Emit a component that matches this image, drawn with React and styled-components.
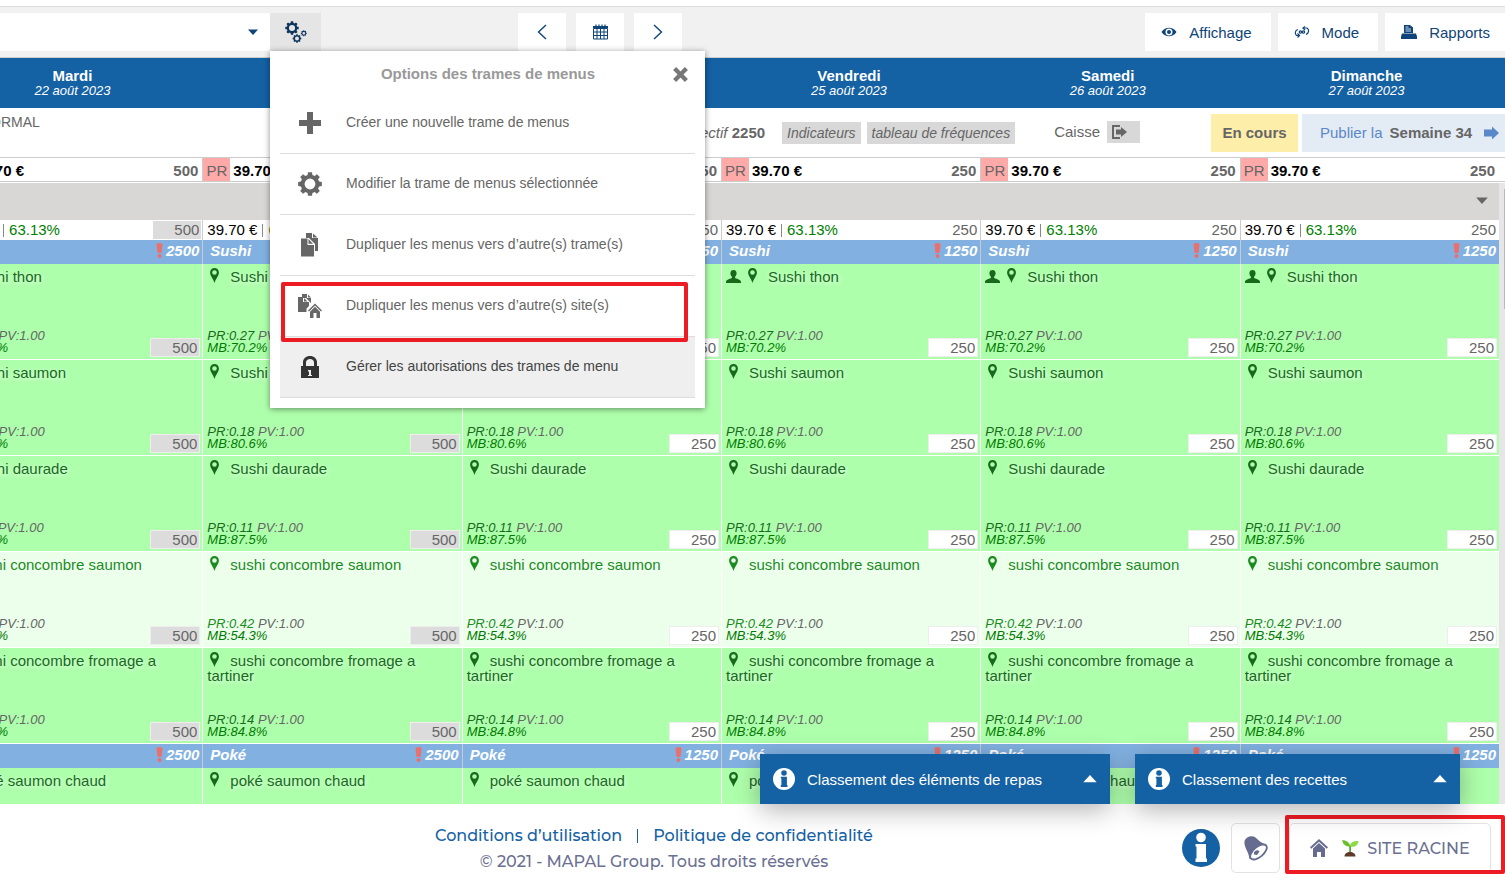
import React from 'react'
import styled, { createGlobalStyle } from 'styled-components';

const bleu = '#1461a4';
const gris = '#666';

const GlobalStyle = createGlobalStyle`
	* {
		box-sizing: border-box;
	}
	body {
		margin: 0;
		background: white;
		color: ${gris};
		font-family: 'Liberation Sans', Arial, sans-serif;
		font-size: 15px;
	}
	button, input, select {
		font: inherit;
		color: inherit;
		border: 0;
		margin: 0;
		padding: 0;
		background: none;
	}
	svg {
		display: block;
		flex: none;
	}
`

const Page = styled.div`
		display: flex;
		flex-direction: column;
		height: 100vh;
		overflow: hidden;
`

/* ---------- barre d'outils ---------- */

const Toolbar = styled.header`
		position: relative;
		z-index: 10;
		display: flex;
		flex: none;
		height: 52px;
		margin-top: 6px;
		padding: 6px 0;
		background: #f1f1f1;
		border-top: 1px solid #ddd;
		border-bottom: 1px solid #ccc;
`

const TrameSelect = styled.label`
		position: relative;
		width: 270px;
		background: white;

		select {
			width: 100%;
			height: 100%;
			appearance: none;
		}
		svg {
			position: absolute;
			right: 12px;
			top: 16px;
		}
`

const GearButton = styled.button`
		display: flex;
		justify-content: center;
		align-items: center;
		width: 51px;
		background: #e5e5e5;
`

const WeekNav = styled.nav`
		display: flex;
		gap: 10px;
		margin-left: 197px;
`

const NavButton = styled.button`
		display: flex;
		justify-content: center;
		align-items: center;
		width: 48px;
		background: white;
`

const Tools = styled.div`
		display: flex;
		gap: 7px;
		margin-left: auto;
`

const ToolButton = styled.button`
		display: flex;
		align-items: center;
		gap: 12px;
		padding: 0 19px 0 16px;
		background: white;
		color: #0e4479;

		&:last-child {
			padding-right: 15px;
		}
`

/* ---------- menu des options ---------- */

const OptionsMenu = styled.section`
		position: absolute;
		top: 44px;
		left: 270px;
		width: 435px;
		padding: 0 10px 10px;
		background: white;
		box-shadow: 0 1px 6px rgba(0,0,0,0.45);
`

const MenuHeader = styled.div`
		display: flex;
		align-items: center;
		height: 42px;
		padding: 4px 7px 0 23px;
`

const MenuTitle = styled.h2`
		flex: 1;
		margin: 0;
		padding-bottom: 2px;
		text-align: center;
		font-size: 15px;
		color: #999;
`

const MenuList = styled.ul`
		margin: 0;
		padding: 0;
		list-style: none;
`

const MenuItem = styled.li`
		position: relative;
		height: 61px;
		border-bottom: 1px solid #ddd;
		background: ${props=>props.$active ? '#efefef' : 'white'};

		button {
			display: flex;
			align-items: center;
			gap: 24px;
			width: 100%;
			height: 100%;
			padding-left: 18px;
			font-size: 14px;
			color: ${props=>props.$active ? '#444' : gris};
		}
		span {
			padding-bottom: 2px;
		}
`

const MenuFrame = styled.div`
		position: absolute;
		z-index: 1;
		inset: 6px 7px -6px 1px;
		border: 4px solid #ed1c24;
		border-radius: 2px;
		pointer-events: none;
`

/* ---------- jours et statut ---------- */

const Clip = styled.div`
		flex: none;
		overflow: hidden;
`

const DaysBar = styled(Clip)`
		background: ${bleu};
`

const DaysTable = styled.table`
		width: calc(100% + 48px);
		height: 50px;
		margin-left: -57px;
		table-layout: fixed;
		border-spacing: 0;
		color: white;

		th {
			padding: 0;
			line-height: 15px;
		}
		span {
			display: block;
			font-size: 13px;
			font-style: italic;
			font-weight: normal;
		}
`

const StatusBar = styled.div`
		display: flex;
		flex: none;
		align-items: center;
		height: 49px;
		overflow: hidden;
`

const TrameName = styled.span`
		align-self: flex-start;
		margin: 6px auto 0 -20px;
		font-size: 14px;
`

const Objectif = styled.span`
		margin-right: 17px;
		font-style: italic;

		b {
			font-style: normal;
		}
`

const StatusButton = styled.button`
		height: 22px;
		margin-right: 6px;
		padding: 0 5px;
		background: #d8d8d8;
		font-size: 14px;
		font-style: italic;
`

const Caisse = styled.div`
		display: flex;
		align-items: center;
		gap: 7px;
		margin: 0 71px 2px 33px;

		button {
			width: 33px;
			height: 22px;
			padding-left: 5px;
			background: #d8d8d8;
		}
`

const EnCours = styled.span`
		width: 87px;
		margin-right: 4px;
		background: #fdeea9;
		text-align: center;
		font-weight: bold;
		line-height: 38px;
`

const Publier = styled.button`
		display: flex;
		align-items: center;
		gap: 7px;
		width: 203px;
		height: 38px;
		padding-left: 18px;
		background: #e3ebf4;
		color: #5b88c9;

		b {
			color: ${gris};
		}
		svg {
			margin-left: 5px;
		}
`

const PrixBar = styled(Clip)`
		border-top: 1px solid #ccc;
		border-bottom: 1px solid #ccc;
`

const PrixTable = styled.table`
		width: calc(100% + 51px);
		margin-left: -57px;
		table-layout: fixed;
		border-spacing: 0;

		td {
			padding: 0;
			border-left: 1px solid #ccc;
		}
`

const Prix = styled.div`
		display: flex;
		height: 23px;
		padding-right: 4px;
		color: black;
		font-weight: bold;
		line-height: 26px;
`

const PrBadge = styled.span`
		width: 27px;
		margin-right: 3px;
		background: #ffa9a9;
		color: ${gris};
		font-weight: normal;
		text-align: center;
`

const Count = styled.span`
		margin-left: auto;
		color: ${gris};
`

/* ---------- planning ---------- */

const Planning = styled.main`
		position: relative;
		z-index: 1;
		flex: 1;
		min-height: 0;
		margin-top: 1px;
`

const Viewport = styled.div`
		display: flex;
		height: 100%;
		overflow: hidden;
`

const Scrollbar = styled.div`
		flex: none;
		width: 6px;
		padding: 6px 0 0 5px;
		background: #e6e6e6;

		&::before {
			content: '';
			display: block;
			height: 120px;
			background: #b9b9c6;
		}
`

const Sheet = styled.div`
		flex: 1;
		min-width: 0;
		overflow: hidden;
`

const Service = styled.button`
		display: flex;
		justify-content: flex-end;
		align-items: center;
		width: 100%;
		height: 37px;
		padding: 0 11px 3px 0;
		background: #d8d7d5;
`

const MenuTable = styled.table`
		width: calc(100% + 57px);
		margin-left: -57px;
		table-layout: fixed;
		border-spacing: 0;

		td, th {
			padding: 0;
			vertical-align: top;
			text-align: left;
			font-weight: normal;
		}
`

const TotalCell = styled.td`
		border-left: 1px solid #ccc;

		div {
			display: flex;
			align-items: center;
			gap: 5px;
			height: 20px;
			padding: 0 1px 0 4px;
			color: black;
			line-height: 18px;
		}
		i {
			width: 1px;
			height: 13px;
			background: #888;
		}
		span {
			color: #008000;
		}
`

const TotalInput = styled.input`
		width: 48px;
		height: 18px;
		margin-left: auto;
		padding: 0 2px 1px 0;
		background: ${props=>props.readOnly ? '#dcdcdc' : 'white'};
		color: ${gris};
		text-align: right;
`

const FamilleCell = styled.th`
		border-left: 1px solid #c4cbd2;
		background: #82b1e1;

		div {
			display: flex;
			align-items: center;
			height: 24px;
			padding: 0 3px 3px 7px;
			color: white;
			font-weight: bold;
			font-style: italic;
		}
		svg {
			margin: 0 3px 0 auto;
		}
`

const RecetteCell = styled.td`
		border-left: 1px solid white;
		border-bottom: 1px solid white;
		background: ${props=>props.$light ? '#ebffeb' : '#aeffac'};
		color: ${props=>props.$light ? '#1a8c1e' : '#176a1c'};
`

const Recette = styled.div`
		display: flex;
		flex-direction: column;
		justify-content: space-between;
		height: 95px;
		padding: 4px 2px 2px 4px;
`

const Nom = styled.div`
		line-height: 15px;
		padding-right: 30px;
		text-shadow: 1px 1px 4px rgba(255,255,255,0.8);

		svg {
			display: inline-block;
			vertical-align: -1px;
		}
`

const Pied = styled.div`
		display: flex;
		justify-content: space-between;
		align-items: flex-end;
`

const Marges = styled.div`
		margin-bottom: 3px;
		font-size: 13px;
		font-style: italic;
		line-height: 12px;

		span {
			color: ${gris};
		}
		div {
			color: #007a00;
		}
`

const Quantite = styled.input`
		width: 50px;
		height: 19px;
		padding-right: 2px;
		border: 1px solid #eee;
		background: ${props=>props.readOnly ? '#dcdcdc' : 'white'};
		color: ${gris};
		text-align: right;
`

const Classements = styled.div`
		position: absolute;
		right: 45px;
		bottom: 0;
		display: flex;
		gap: 25px;
`

const Classement = styled.button`
		display: flex;
		align-items: center;
		gap: 12px;
		width: ${props=>props.$width}px;
		height: 50px;
		padding: 0 13px;
		background: ${bleu};
		color: white;
		box-shadow: 0 6px 26px rgba(0,0,0,0.3);

		svg:last-child {
			margin-left: auto;
		}
`

/* ---------- pied de page ---------- */

const Footer = styled.footer`
		display: flex;
		flex: none;
		align-items: center;
		height: 74px;
		font-family: Montserrat, Inter, sans-serif;
		font-size: 16px;
		font-weight: 500;
		color: #6b7092;
`

const Mentions = styled.div`
		flex: 1;
		padding: 16px 0 0 126px;
		text-align: center;
		line-height: 26px;

		a {
			color: ${bleu};
			text-decoration: none;
		}
		i {
			display: inline-block;
			width: 1px;
			height: 14px;
			margin: 0 15px;
			background: ${bleu};
			vertical-align: -2px;
		}
`

const FooterActions = styled.div`
		display: flex;
		align-items: center;
		margin-top: 14px;
		padding-right: 14px;
`

const BoxButton = styled.button`
		display: flex;
		justify-content: center;
		align-items: center;
		height: 50px;
		min-width: 49px;
		margin-left: 11px;
		border: 1px solid #e2e2e2;
		border-radius: 5px;
`

const SiteBox = styled.div`
		position: relative;
		margin-left: 9px;

		button {
			gap: 8px;
			width: 202px;
			margin: 0;
		}
		svg:first-child {
			margin-right: 6px;
		}
`

const SiteFrame = styled.div`
		position: absolute;
		inset: -8px -14px -1px -4px;
		border: 4px solid #ed1c24;
		border-radius: 2px;
		pointer-events: none;
`

/* ---------- icônes ---------- */

// couronne dentée : 8 dents autour du cercle, avec le trou central
const gearPath = (cx, cy, r) => {
	const points = []
	for (let i = 0; i < 8; i++) {
		const a = i * Math.PI / 4
		const steps = [[-0.26, 0.78], [-0.17, 1], [0.17, 1], [0.26, 0.78]]
		steps.forEach(([d, k]) => {
			points.push((cx + Math.cos(a + d) * r * k).toFixed(2) + ' ' + (cy + Math.sin(a + d) * r * k).toFixed(2))
		})
	}
	const h = r * 0.45
	return `M${points.join('L')}ZM${cx - h} ${cy}a${h} ${h} 0 1 0 ${2 * h} 0a${h} ${h} 0 1 0 ${-2 * h} 0Z`
}

const Caret = ({color, up, width = 10}) => (
	<svg width={width} height={width / 2 + 1} viewBox="0 0 10 6" fill={color}>
		<path d={up ? 'M0 5.5 5 0l5 5.5z' : 'M0 .5h10L5 6z'} />
	</svg>
)

const GearsIcon = () => (
	<svg width="22" height="22" viewBox="0 0 22 22" fill="#0d355c" fillRule="evenodd">
		<path d={gearPath(7, 7, 6.8)} />
		<path d={gearPath(12, 17.5, 4.4)} />
		<path d={gearPath(18.8, 12.3, 3)} />
	</svg>
)

const GearIcon = () => (
	<svg width="24" height="24" viewBox="0 0 24 24" fill={gris} fillRule="evenodd">
		<path d={gearPath(12, 12, 12)} />
	</svg>
)

const PlusIcon = () => (
	<svg width="24" height="24" viewBox="0 0 24 24" fill={gris}>
		<path d="M9 1h6v8h8v6h-8v8H9v-8H1V9h8z" />
	</svg>
)

const CopyIcon = () => (
	<svg width="24" height="24" viewBox="0 0 24 24" fill={gris}>
		<path d="M8 0h6v5h6v13h-3V11l-6-6H8z" />
		<path d="M15 .5 19.500 4.500H15z" />
		<path d="M3 5.500h6.500V12H16v11.500H3z" />
		<path d="M10.500 6 15 10.800h-4.500z" />
	</svg>
)

const CopyHomeIcon = () => (
	<svg width="24" height="24" viewBox="0 0 24 24" fill={gris}>
		<path d="M4 0h5v4h4v5l-5-5H4zM10 .5 13 3.500h-3z" />
		<path d="M0 3h5v5h6v4l-2.500 2.500V18H0z" />
		<path d="M6 4 9.500 7.500H6z" />
		<path d="m17 9.500 7 7-1 1-6-6-6 6-1-1z" />
		<path d="m17 12.800 5 5V24h-3.500v-5h-3v5H12v-6.200z" />
	</svg>
)

const LockIcon = () => (
	<svg width="24" height="24" viewBox="0 0 24 24" fill="#333" fillRule="evenodd">
		<path d="M5 11V7.500C5 3.500 8 1 12 1s7 2.500 7 6.500V11h2v12H3V11zM8 11h8V7.500C16 5.300 14.300 4 12 4S8 5.300 8 7.500zM10 15v1.500h1V20h-1v1h4v-1h-1v-5z" />
	</svg>
)

const CloseIcon = () => (
	<svg width="15" height="15" viewBox="0 0 14 14" fill="none" stroke="#777" strokeWidth="4">
		<path d="M1.500 1.500 12.500 12.500M12.500 1.500 1.500 12.500" />
	</svg>
)

const ChevronIcon = ({right}) => (
	<svg width="10" height="16" viewBox="0 0 10 16" fill="none" stroke="#0e4479" strokeWidth="1.400">
		<path d={right ? 'M1 1l7.500 7L1 15' : 'M9 1 1.500 8 9 15'} />
	</svg>
)

const CalendarIcon = () => (
	<svg width="15" height="16" viewBox="0 0 15 16" fill="none" stroke="#0e4479">
		<path d="M.500 4.500h14v10.500H.500zM.500 8h14M.500 11.500h14M4 4.500V15M7.500 4.500V15M11 4.500V15" />
		<path d="M0 3h15" strokeWidth="2" />
		<path d="M3 .500v3M6 .500v3M9 .500v3M12 .500v3" strokeWidth="1.200" />
	</svg>
)

const EyeIcon = () => (
	<svg width="16" height="10" viewBox="0 0 16 10" fill="#0e4479" fillRule="evenodd">
		<path d="M.5 5c2-3 4.700-4.200 7.500-4.200S13.500 2 15.500 5c-2 3-4.700 4.200-7.500 4.200S2.500 8 .5 5zm4 0a3.500 3.500 0 1 0 7 0 3.500 3.500 0 1 0-7 0z" />
		<circle cx="8" cy="5" r="2" />
	</svg>
)

const ModeIcon = () => (
	<svg width="16" height="12" viewBox="0 0 16 12" fill="none" stroke="#0e4479" strokeWidth="1.200">
		<path d="M4 3.500C1 4 .500 8 2.500 9.500H5M12 8.500c3-1 3.500-5 1-6.500H9" />
		<path d="M3.500 7.500 5.500 9.500l-2 2M11 .500 9 2l2 2" />
		<circle cx="6.500" cy="6" r="1.200" />
		<circle cx="9.500" cy="6" r="1.200" />
	</svg>
)

const PrinterIcon = () => (
	<svg width="16" height="14" viewBox="0 0 16 14" fill="#0e4479">
		<path d="M3 0h6l3 2.500V8H3z" />
		<path d="M4.500 2h3M4.500 4h5.500M4.500 6h5.500" stroke="white" strokeWidth=".8" />
		<path d="M1 8.500h14l1 3V14H0v-2.500z" />
	</svg>
)

const ExitIcon = () => (
	<svg width="15" height="14" viewBox="0 0 15 14" fill={gris}>
		<path d="M8 0v2H2v10h6v2H0V0z" />
		<path d="M4 4.500h5V2l6 5-6 5V9.500H4z" />
	</svg>
)

const ArrowIcon = () => (
	<svg width="15" height="14" viewBox="0 0 15 14" fill="#5b88c9">
		<path d="M0 3.500h8V.500L15 7l-7 6.500v-3H0z" />
	</svg>
)

const UserIcon = styled(props => (
	<svg width="15" height="13" viewBox="0 0 15 13" fill="currentColor" {...props}>
		<path d="M7.500 0c1.900 0 3.100 1.200 3.100 3.300 0 1.500-.7 2.700-1.500 3.500v1C9.600 8.900 15 9.200 15 12v1H0v-1c0-2.800 5.400-3.100 5.900-4.200v-1c-.8-.8-1.500-2-1.500-3.500C4.400 1.200 5.600 0 7.500 0z" />
	</svg>
))`
		margin-right: 4px;
`

const PinIcon = styled(props => (
	<svg width="10" height="15" viewBox="0 0 10 15" fill="currentColor" fillRule="evenodd" {...props}>
		<path d="M4.500 0a4.400 4.400 0 0 1 4.400 4.600C8.900 8 6 10.500 4.500 15 3 10.500.1 8 .1 4.600A4.400 4.400 0 0 1 4.500 0zm0 2.200a2.300 2.300 0 1 0 0 4.600 2.300 2.300 0 0 0 0-4.600z" />
	</svg>
))`
		margin: 0 10px 0 3px;
`

const AlertIcon = () => (
	<svg width="7" height="15" viewBox="0 0 7 15" fill="#e8706f">
		<path d="M.500 1.500Q.500 0 3.500 0t3 1.500L5.500 10h-4z" />
		<circle cx="3.500" cy="13" r="2" />
	</svg>
)

const InfoIcon = ({size, color, mark}) => (
	<svg width={size} height={size} viewBox="0 0 38 38" fill={mark}>
		<circle cx="19" cy="19" r="19" fill={color} />
		<circle cx="19" cy="8.500" r="4.800" />
		<path d="M13.500 15H24v14.500h1V33H13.500v-3.500h1v-12h-1z" />
	</svg>
)

const BellIcon = () => (
	<svg width="26" height="26" viewBox="0 0 26 26">
		<path d="M1.500 6C3 1.500 9 0 12.500 2.500c2.500 2.500 6.500 6 11.500 7.500L6.500 24C6 17 .5 12 1.500 6z" fill="#666c90" />
		<ellipse cx="15.500" cy="17" rx="10" ry="5" transform="rotate(-40 15.500 17)" fill="white" stroke="#666c90" strokeWidth="1.800" />
		<path d="M11 19.500a3.200 3.200 0 0 1 5.500-3l-2.500 3.500z" fill="#666c90" />
	</svg>
)

const HomeIcon = () => (
	<svg width="18" height="18" viewBox="0 0 18 18" fill="#666c90">
		<path d="m9 0 9 8.200-1.300 1.500L9 2.800 1.300 9.700 0 8.200z" />
		<path d="m9 4 6 5.500V18h-4v-5H7v5H3V9.500z" />
	</svg>
)

const SproutIcon = () => (
	<svg width="17" height="18" viewBox="0 0 17 18">
		<path d="M8 14c.3-3 .3-5 0-8" fill="none" stroke="#5c9e31" strokeWidth="1.800" />
		<path d="M8.500 7.500C7.500 3 4 .8 0 1.200 1 6 4.500 7.800 8.500 7.500z" fill="#6cc02f" />
		<path d="M8 7.500C8 3.500 11.500 1.800 16.500 2c-.5 4.500-4 6.500-8.500 5.500z" fill="#8bdb45" />
		<path d="M2.500 17.500c0-3 2.500-4.500 5.500-4.500s5.500 1.500 5.500 4.500z" fill="#5d3a2a" />
	</svg>
)

/* ---------- données ---------- */

const jours = [
	{nom: 'Mardi', date: '22 août 2023', quantite: 500, verrou: true},
	{nom: 'Mercredi', date: '23 août 2023', quantite: 500, verrou: true},
	{nom: 'Jeudi', date: '24 août 2023', quantite: 250, perso: true},
	{nom: 'Vendredi', date: '25 août 2023', quantite: 250, perso: true},
	{nom: 'Samedi', date: '26 août 2023', quantite: 250, perso: true},
	{nom: 'Dimanche', date: '27 août 2023', quantite: 250, perso: true},
]

const sushis = [
	{nom: 'Sushi thon', pr: '0.27', mb: '70.2%', perso: true},
	{nom: 'Sushi saumon', pr: '0.18', mb: '80.6%'},
	{nom: 'Sushi daurade', pr: '0.11', mb: '87.5%'},
	{nom: 'sushi concombre saumon', pr: '0.42', mb: '54.3%', light: true},
	{nom: 'sushi concombre fromage a tartiner', pr: '0.14', mb: '84.8%'},
]

const pokes = [
	{nom: 'poké saumon chaud'},
]

const options = [
	{texte: 'Créer une nouvelle trame de menus', Icon: PlusIcon},
	{texte: 'Modifier la trame de menus sélectionnée', Icon: GearIcon},
	{texte: 'Dupliquer les menus vers d’autre(s) trame(s)', Icon: CopyIcon},
	{texte: 'Dupliquer les menus vers d’autre(s) site(s)', Icon: CopyHomeIcon, cadre: true},
	{texte: 'Gérer les autorisations des trames de menu', Icon: LockIcon, active: true},
]

const Famille = ({nom, recettes}) => (
	<>
		<tr>
			{jours.map(jour => (
				<FamilleCell key={jour.nom}>
					<div>{nom}<AlertIcon />{jour.quantite * 5}</div>
				</FamilleCell>
			))}
		</tr>
		{recettes.map(recette => (
			<tr key={recette.nom}>
				{jours.map(jour => (
					<RecetteCell key={jour.nom} $light={recette.light}>
						<Recette>
							<Nom>
								{recette.perso && jour.perso && <UserIcon />}
								<PinIcon />
								{recette.nom}
							</Nom>
							{recette.pr && (
								<Pied>
									<Marges>
										PR:{recette.pr} <span>PV:1.00</span>
										<div>MB:{recette.mb}</div>
									</Marges>
									<Quantite
										aria-label={`${recette.nom}, ${jour.nom}`}
										defaultValue={jour.quantite}
										readOnly={jour.verrou}
									/>
								</Pied>
							)}
						</Recette>
					</RecetteCell>
				))}
			</tr>
		))}
	</>
)

export default () => {
	return (
		<Page>
			<GlobalStyle />
			<Toolbar>
				<TrameSelect>
					<select aria-label="Trame de menus"><option></option></select>
					<Caret color="#0e4479" />
				</TrameSelect>
				<GearButton aria-label="Options des trames"><GearsIcon /></GearButton>
				<WeekNav>
					<NavButton aria-label="Semaine précédente"><ChevronIcon /></NavButton>
					<NavButton aria-label="Calendrier"><CalendarIcon /></NavButton>
					<NavButton aria-label="Semaine suivante"><ChevronIcon right /></NavButton>
				</WeekNav>
				<Tools>
					<ToolButton><EyeIcon />Affichage</ToolButton>
					<ToolButton><ModeIcon />Mode</ToolButton>
					<ToolButton><PrinterIcon />Rapports</ToolButton>
				</Tools>

				<OptionsMenu>
					<MenuHeader>
						<MenuTitle>Options des trames de menus</MenuTitle>
						<button aria-label="Fermer"><CloseIcon /></button>
					</MenuHeader>
					<MenuList>
						{options.map(({texte, Icon, active, cadre}) => (
							<MenuItem key={texte} $active={active}>
								<button><Icon /><span>{texte}</span></button>
								{cadre && <MenuFrame />}
							</MenuItem>
						))}
					</MenuList>
				</OptionsMenu>
			</Toolbar>

			<DaysBar>
				<DaysTable>
					<thead>
						<tr>
							{jours.map(jour => (
								<th key={jour.nom}>{jour.nom}<span>{jour.date}</span></th>
							))}
						</tr>
					</thead>
				</DaysTable>
			</DaysBar>

			<StatusBar>
				<TrameName>NORMAL</TrameName>
				<Objectif>Objectif <b>2250</b></Objectif>
				<StatusButton>Indicateurs</StatusButton>
				<StatusButton>tableau de fréquences</StatusButton>
				<Caisse>Caisse <button aria-label="Caisse"><ExitIcon /></button></Caisse>
				<EnCours>En cours</EnCours>
				<Publier>Publier la <b>Semaine 34</b><ArrowIcon /></Publier>
			</StatusBar>

			<PrixBar>
				<PrixTable>
					<tbody>
						<tr>
							{jours.map(jour => (
								<td key={jour.nom}>
									<Prix><PrBadge>PR</PrBadge>39.70 €<Count>{jour.quantite}</Count></Prix>
								</td>
							))}
						</tr>
					</tbody>
				</PrixTable>
			</PrixBar>

			<Planning>
				<Viewport>
					<Sheet>
						<Service aria-label="Replier le service"><Caret color={gris} width={12} /></Service>
						<MenuTable>
							<tbody>
								<tr>
									{jours.map(jour => (
										<TotalCell key={jour.nom}>
											<div>
												39.70 €<i /><span>63.13%</span>
												<TotalInput
													aria-label={`Total ${jour.nom}`}
													defaultValue={jour.quantite}
													readOnly={jour.verrou}
												/>
											</div>
										</TotalCell>
									))}
								</tr>
								<Famille nom="Sushi" recettes={sushis} />
								<Famille nom="Poké" recettes={pokes} />
							</tbody>
						</MenuTable>
					</Sheet>
					<Scrollbar />
				</Viewport>
				<Classements>
					<Classement $width={350}>
						<InfoIcon size={22} color="white" mark={bleu} />
						Classement des éléments de repas
						<Caret color="white" up width={14} />
					</Classement>
					<Classement $width={325}>
						<InfoIcon size={22} color="white" mark={bleu} />
						Classement des recettes
						<Caret color="white" up width={14} />
					</Classement>
				</Classements>
			</Planning>

			<Footer>
				<Mentions>
					<div>
						<a href="#conditions">Conditions d’utilisation</a>
						<i />
						<a href="#confidentialite">Politique de confidentialité</a>
					</div>
					<div>© 2021 - MAPAL Group. Tous droits réservés</div>
				</Mentions>
				<FooterActions>
					<button aria-label="Aide"><InfoIcon size={38} color={bleu} mark="white" /></button>
					<BoxButton aria-label="Notifications"><BellIcon /></BoxButton>
					<SiteBox>
						<BoxButton>
							<HomeIcon />
							<SproutIcon />
							SITE RACINE
						</BoxButton>
						<SiteFrame />
					</SiteBox>
				</FooterActions>
			</Footer>
		</Page>
	)
}
